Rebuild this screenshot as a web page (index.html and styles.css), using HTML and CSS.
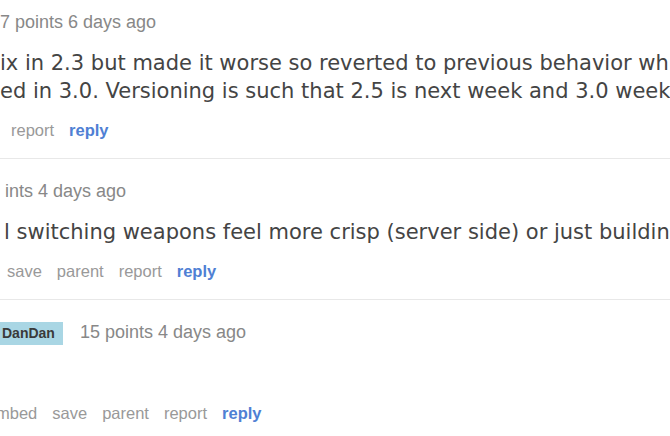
FILE: index.html
```html
<!DOCTYPE html>
<html lang="en">
<head>
    <meta charset="UTF-8">
    <title>comments</title>
    <link rel="stylesheet" href="styles.css">
</head>
<body>
    <div class="comments">

        <div class="comment">
            <p class="tagline">7 points 6 days ago</p>
            <div class="md">
                <p>ix in 2.3 but made it worse so reverted to previous behavior wh<br>ed in 3.0. Versioning is such that 2.5 is next week and 3.0 week</p>
            </div>
            <ul class="buttons first">
                <li><a href="#">report</a></li>
                <li><a href="#" class="reply">reply</a></li>
            </ul>
        </div>

        <div class="comment">
            <p class="tagline second">ints 4 days ago</p>
            <div class="md">
                <p class="second">l switching weapons feel more crisp (server side) or just buildin</p>
            </div>
            <ul class="buttons second">
                <li><a href="#">save</a></li>
                <li><a href="#">parent</a></li>
                <li><a href="#">report</a></li>
                <li><a href="#" class="reply">reply</a></li>
            </ul>
        </div>

        <div class="comment">
            <p class="tagline">
                <span class="author">DanDan</span>
                <span class="score">15 points 4 days ago</span>
            </p>
            <div class="md">
                <p>&nbsp;</p>
            </div>
            <ul class="buttons third">
                <li><a href="#">mbed</a></li>
                <li><a href="#">save</a></li>
                <li><a href="#">parent</a></li>
                <li><a href="#">report</a></li>
                <li><a href="#" class="reply">reply</a></li>
            </ul>
        </div>

    </div>
</body>
</html>
```

FILE: styles.css
```css
body {
    margin: 0;
    background-color: #fff;
    font-family: "Liberation Sans", Arial, sans-serif;
    overflow: hidden;
}
.comments {
    white-space: nowrap;
}
.comment {
    border-bottom: 1px solid #e8e8e8;
    padding: 20px 0 17px;
}
.comment:first-child {
    padding-top: 10px;
}
.comment:last-child {
    border-bottom: none;
}
.tagline {
    margin: 0;
    font-size: 18px;
    line-height: 24px;
    color: #888;
}
.tagline.second {
    padding-left: 5px;
}
.author {
    display: inline-block;
    background-color: #a9d6e4;
    color: #3a3a3a;
    font-weight: bold;
    font-size: 14px;
    line-height: 19px;
    padding: 2px 8px 2px 2px;
    margin-right: 12px;
}
.md p {
    margin: 15px 0 0;
    font-family: "DejaVu Sans", Verdana, sans-serif;
    font-size: 21px;
    line-height: 28px;
    color: #444;
}
.md p.second {
    padding-left: 4px;
}
.buttons {
    list-style: none;
    margin: 14px 0 0;
    padding: 0;
    display: flex;
    gap: 15px;
    font-size: 16.5px;
    line-height: 22px;
}
.buttons.first {
    padding-left: 11px;
}
.buttons.second {
    padding-left: 7px;
}
.buttons.third {
    margin-left: -4px;
}
.buttons a {
    color: #999;
    text-decoration: none;
}
.buttons a.reply {
    color: #4f80d4;
    font-weight: bold;
}
```
